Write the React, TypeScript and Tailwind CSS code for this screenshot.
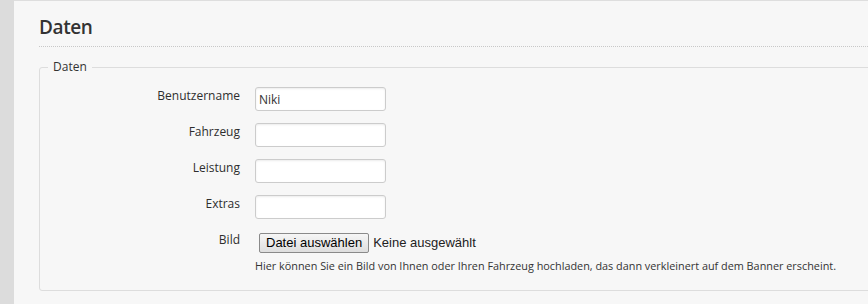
import React from "react";

const rows = [
  { label: "Benutzername", value: "Niki" },
  { label: "Fahrzeug", value: "" },
  { label: "Leistung", value: "" },
  { label: "Extras", value: "" },
];

export default function App() {
  return (
    <div className="flex h-[304px] w-[868px] overflow-hidden bg-[#f7f7f7] text-[#333]" style={{ fontFamily: '"Open Sans", sans-serif' }}>
      <div className="w-[14px] shrink-0 bg-[#dcdcdc]" />
      <div className="flex-1 border-t border-[#dedede] pl-[25px]">
        <div className="mr-[-20px]">
          <h1 className="pt-[13px] pb-[5px] text-[19px] leading-[27px] font-semibold tracking-[-0.4px] text-[#333]">Daten</h1>
          <div className="border-t border-dotted border-[#c8c8c8]" />
          <fieldset className="mt-[12px] rounded-[3px] border border-[#dddddd] pl-[8px] pb-[17px] pt-[12px]">
            <legend className="px-[5px] text-[12px] leading-[16px] text-[#333]">Daten</legend>
            <div className="flex flex-col gap-[12px]">
              {rows.map((r) => (
                <div key={r.label} className="flex items-start">
                  <label className="w-[192px] pt-[1px] text-right text-[12px] leading-[16px] text-[#2e2e2e]">{r.label}</label>
                  <input
                    defaultValue={r.value}
                    className="ml-[15px] h-[24px] w-[131px] rounded-[3px] border border-[#cccccc] bg-white px-[3px] text-[12px] text-[#333] shadow-[inset_0_1px_2px_rgba(0,0,0,0.08)] outline-none"
                  />
                </div>
              ))}
              <div className="flex items-start">
                <label className="w-[192px] pt-[1px] text-right text-[12px] leading-[16px] text-[#2e2e2e]">Bild</label>
                <div className="ml-[15px] flex flex-col">
                  <div className="flex items-center pt-[2px]" style={{ fontFamily: '"Liberation Sans", Arial, sans-serif' }}>
                    <button className="ml-[4px] h-[20px] rounded-[2px] border border-[#8a8a8a] bg-gradient-to-b from-[#f6f6f6] to-[#dedede] px-[6px] text-[13px] leading-[18px] text-black">
                      Datei auswählen
                    </button>
                    <span className="ml-[4px] text-[13px] text-[#222]">Keine ausgewählt</span>
                  </div>
                  <p className="mt-[6px] whitespace-nowrap text-[10.85px] leading-[14px] text-[#333]">
                    Hier können Sie ein Bild von Ihnen oder Ihren Fahrzeug hochladen, das dann verkleinert auf dem Banner erscheint.
                  </p>
                </div>
              </div>
            </div>
          </fieldset>
        </div>
      </div>
    </div>
  );
}
